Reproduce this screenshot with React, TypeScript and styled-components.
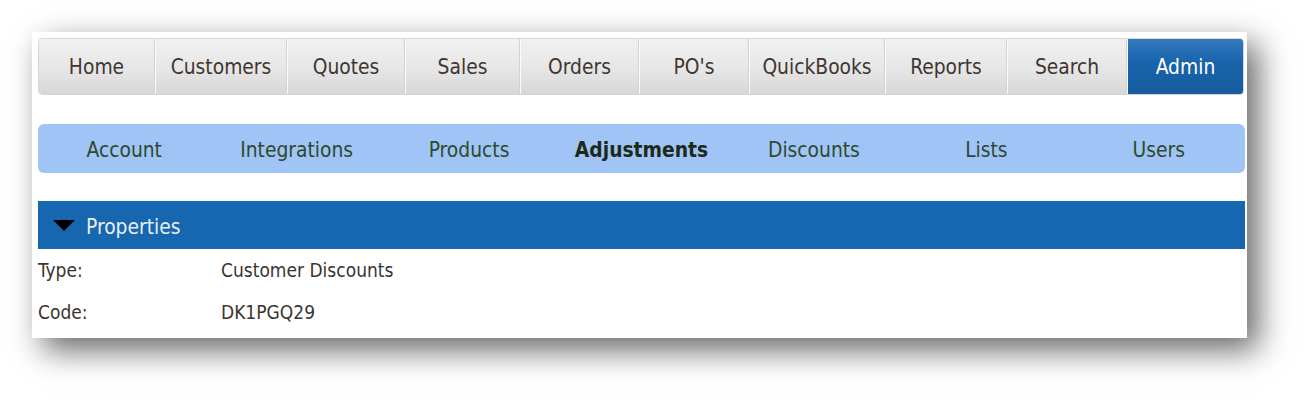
import React from 'react'
import styled, {createGlobalStyle} from 'styled-components'

const GlobalStyle = createGlobalStyle`
  html, body {
    margin: 0;
    padding: 0;
    background: #ffffff;
  }
  body {
    font-family: 'DejaVu Sans Condensed', 'DejaVu Sans', sans-serif;
  }
`

const Page = styled.div`
  padding: 32px;
  width: 1312px;
  height: 403px;
  box-sizing: border-box;
`

const Card = styled.div`
  width: 1215px;
  height: 306px;
  box-sizing: border-box;
  background: #ffffff;
  padding: 6px 2px 0 6px;
  box-shadow: 11px 12px 30px rgba(0, 0, 0, 0.6);
`

const MainNav = styled.nav`
  display: grid;
  grid-template-columns: 116px 132px 118px 115px 119px 110px 136px 122px 120px 116px;
  height: 57px;
  width: 1206px;
  border: 1px solid #d6d6d6;
  border-radius: 4px;
  box-sizing: border-box;
  overflow: hidden;
`

const MainTab = styled.div<{$active?: boolean}>`
  display: flex;
  align-items: center;
  justify-content: center;
  padding-top: 1px;
  font-size: 20.8px;
  color: ${p => (p.$active ? '#ffffff' : '#3f3631')};
  background: ${p =>
    p.$active
      ? 'linear-gradient(to bottom, #3478be 0%, #1763ab 45%, #175c9f 100%)'
      : 'linear-gradient(to bottom, #f1f1f1 0%, #e6e6e6 55%, #d7d7d7 100%)'};
  border-left: 1px solid #fbfbfb;
  border-right: 1px solid #d2d2d2;

  &:first-child {
    border-left: none;
  }
  &:last-child {
    border-right: none;
  }
`

const SubNav = styled.nav`
  display: grid;
  grid-template-columns: repeat(7, 1fr);
  margin-top: 29px;
  height: 49px;
  width: 1207px;
  background: #9fc4f5;
  border-radius: 6px;
`

const SubTab = styled.div<{$active?: boolean}>`
  display: flex;
  align-items: center;
  justify-content: center;
  padding-top: 2px;
  font-size: 20.8px;
  font-weight: ${p => (p.$active ? 700 : 400)};
  color: ${p => (p.$active ? '#1c2a1a' : '#2e4a2e')};
`

const SectionHeader = styled.div`
  display: flex;
  align-items: center;
  gap: 11px;
  margin-top: 28px;
  height: 48px;
  width: 1207px;
  box-sizing: border-box;
  padding: 3px 0 0 15px;
  background: #1666b0;
  color: #e9eff6;
  font-size: 20.8px;
`

const Caret = styled.span`
  width: 0;
  height: 0;
  border-left: 11px solid transparent;
  border-right: 11px solid transparent;
  border-top: 11px solid #000000;
  margin-top: -2px;
`

const Fields = styled.div`
  display: grid;
  grid-template-columns: 183px 1fr;
  grid-auto-rows: 42px;
  font-size: 19px;
  color: #3a3430;
`

const Cell = styled.div`
  display: flex;
  align-items: center;
`

const mainTabs = ['Home', 'Customers', 'Quotes', 'Sales', 'Orders', "PO's", 'QuickBooks', 'Reports', 'Search', 'Admin']
const subTabs = ['Account', 'Integrations', 'Products', 'Adjustments', 'Discounts', 'Lists', 'Users']
const fields: [string, string][] = [
  ['Type:', 'Customer Discounts'],
  ['Code:', 'DK1PGQ29'],
]

export default function App() {
  return (
    <Page>
      <GlobalStyle />
      <Card>
        <MainNav>
          {mainTabs.map(tab => (
            <MainTab key={tab} $active={tab === 'Admin'}>
              {tab}
            </MainTab>
          ))}
        </MainNav>
        <SubNav>
          {subTabs.map(tab => (
            <SubTab key={tab} $active={tab === 'Adjustments'}>
              {tab}
            </SubTab>
          ))}
        </SubNav>
        <SectionHeader>
          <Caret />
          Properties
        </SectionHeader>
        <Fields>
          {fields.map(([label, value]) => (
            <React.Fragment key={label}>
              <Cell>{label}</Cell>
              <Cell>{value}</Cell>
            </React.Fragment>
          ))}
        </Fields>
      </Card>
    </Page>
  )
}
